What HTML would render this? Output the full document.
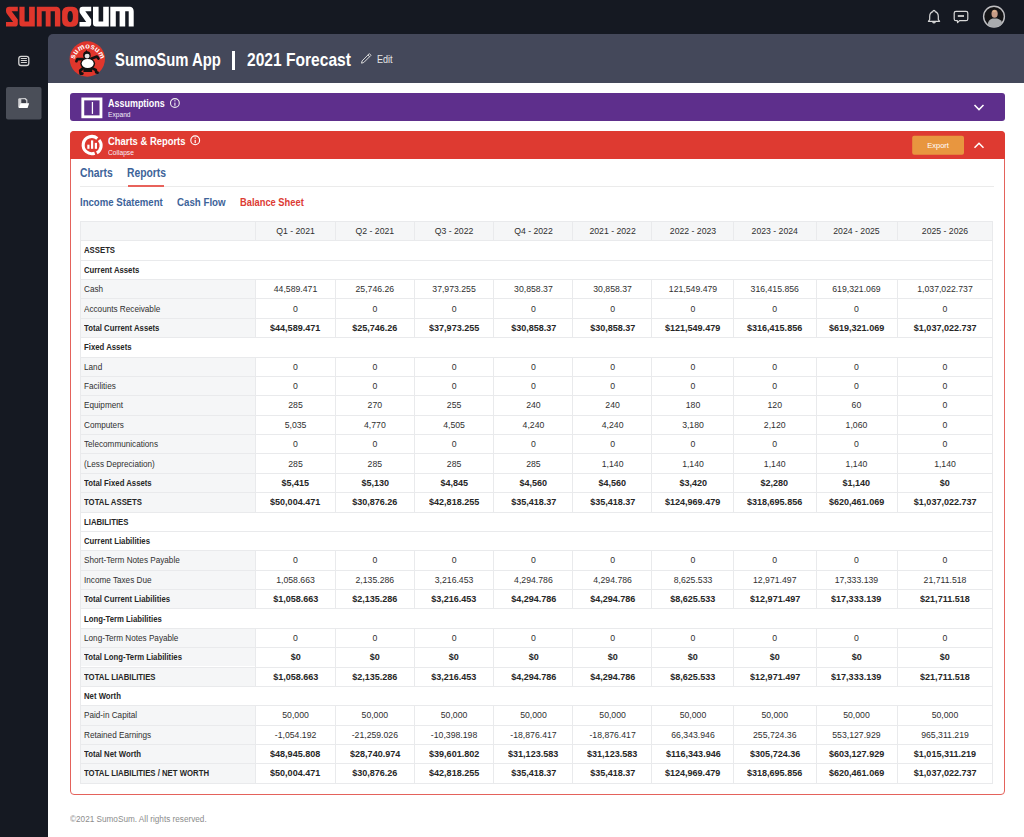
<!DOCTYPE html>
<html><head><meta charset="utf-8"><title>SumoSum App | 2021 Forecast</title>
<style>
html,body{margin:0;padding:0;}
body{width:1024px;height:837px;overflow:hidden;position:relative;background:#151922;font-family:"Liberation Sans",sans-serif;}
.abs{position:absolute;}
#top{position:absolute;left:0;top:0;width:1024px;height:34px;background:#151922;}
#side{position:absolute;left:0;top:34px;width:48px;height:803px;background:#151922;}
#band{position:absolute;left:48px;top:34px;width:976px;height:49px;background:#44485a;border-top-left-radius:5px;}
#main{position:absolute;left:48px;top:83px;width:976px;height:754px;background:#fff;}
.sx{display:inline-block;transform-origin:0 50%;white-space:nowrap;}
.bg{position:absolute;}
.hl{position:absolute;height:1px;background:#e9eaec;}
.vl{position:absolute;width:1px;background:#e9eaec;}
.t{position:absolute;height:19.37px;line-height:19.37px;font-size:8.7px;text-align:center;white-space:nowrap;color:#303030;}
.t.l{text-align:left;}
.sl{display:inline-block;transform-origin:0 50%;}
.sc{display:inline-block;transform-origin:50% 50%;}
.t.b{font-weight:bold;color:#262626;}
#panel1{position:absolute;left:69.5px;top:93.2px;width:935px;height:28.2px;background:#5e2f8c;border-radius:3px;}
#panel2{position:absolute;left:70px;top:131px;width:933px;height:662px;border:1px solid #e4625b;border-radius:4px;background:#fff;}
#p2head{position:absolute;left:70px;top:131px;width:935px;height:27.5px;background:#de3a31;border-radius:4px 4px 0 0;}
.ptitle{position:absolute;color:#fff;font-weight:bold;white-space:nowrap;}
.psub{position:absolute;color:#f4eefa;white-space:nowrap;}
.tab{position:absolute;font-weight:bold;white-space:nowrap;color:#3d6399;}
</style></head>
<body>
<div id="top"></div>
<div id="side"></div>
<div id="band"></div>
<div id="main"></div>

<!-- logo -->
<svg class="abs" style="left:0;top:0" width="140" height="34" viewBox="0 0 140 34">
 <g fill="#e0362c">
  <path d="M9.2,6.8 L17.8,6.8 L17.8,11.3 L11.6,11.3 L17.8,19.6 L17.8,23.8 Q17.8,26.6 15,26.6 L6,26.6 L6,21.9 L13.1,21.9 L6.9,13.8 Q6,12.6 6,11 L6,10 Q6,6.8 9.2,6.8 Z"/>
  <path d="M19.4,6.8 L24.6,6.8 L24.6,21.6 L29.1,21.6 L29.1,6.8 L34.8,6.8 L34.8,26.6 L22.4,26.6 Q19.4,26.6 19.4,23.6 Z"/>
  <path d="M36.8,6.8 L56.8,6.8 Q60.3,7.5 60.3,11.5 L60.3,26.6 L54.9,26.6 L54.9,11.2 L50.6,11.2 L50.6,26.6 L45.7,26.6 L45.7,11.2 L41.7,11.2 L41.7,26.6 L36.8,26.6 Z"/>
  <path fill-rule="evenodd" d="M68,6.8 L72.4,6.8 Q78.3,6.8 78.3,13.5 L78.3,20 Q78.3,26.7 72.4,26.7 L68,26.7 Q62.1,26.7 62.1,20 L62.1,13.5 Q62.1,6.8 68,6.8 Z M70.2,10.9 Q67.5,10.9 67.5,16.5 Q67.5,22.2 70.2,22.2 Q72.9,22.2 72.9,16.5 Q72.9,10.9 70.2,10.9 Z"/>
 </g>
 <g fill="#ffffff">
  <path d="M82.6,6.8 L91.2,6.8 L91.2,11.3 L85.3,11.3 L91.2,19.6 L91.2,23.8 Q91.2,26.6 88.4,26.6 L79.5,26.6 L79.5,21.9 L86.2,21.9 L80.4,13.8 Q79.5,12.6 79.5,11 L79.5,10 Q79.5,6.8 82.6,6.8 Z"/>
  <path d="M93,6.8 L98.6,6.8 L98.6,21.6 L103.2,21.6 L103.2,6.8 L108.8,6.8 L108.8,26.6 L96,26.6 Q93,26.6 93,23.6 Z"/>
  <path d="M110.3,6.8 L130.2,6.8 Q133.7,7.5 133.7,11.5 L133.7,26.6 L128.7,26.6 L128.7,11.2 L125.2,11.2 L125.2,26.6 L119.6,26.6 L119.6,11.2 L115.8,11.2 L115.8,26.6 L110.3,26.6 Z"/>
 </g>
</svg>

<!-- top right icons -->
<svg class="abs" style="left:920px;top:0" width="104" height="34" viewBox="920 0 104 34">
 <g fill="none" stroke="#d8d8d8" stroke-width="1.2" stroke-linejoin="round">
  <path d="M934,10.3 Q935,10.3 935.2,11.6 Q938.3,12.8 938.3,16.5 L938.3,19.5 L939.6,21.3 L928.4,21.3 L929.7,19.5 L929.7,16.5 Q929.7,12.8 932.8,11.6 Q933,10.3 934,10.3 Z"/>
  <path d="M932.5,22.2 Q934,23.4 935.5,22.2"/>
  <path d="M956,11.3 L966,11.3 Q967.8,11.3 967.8,13.1 L967.8,18.9 Q967.8,20.7 966,20.7 L959.5,20.7 L957.6,22.6 L957.3,20.7 L956,20.7 Q954.2,20.7 954.2,18.9 L954.2,13.1 Q954.2,11.3 956,11.3 Z"/>
 </g>
 <rect x="957.8" y="15" width="6.2" height="2" fill="#bdbdbd"/>
 <circle cx="994" cy="16.6" r="10.4" fill="#141416" stroke="#bfbfc2" stroke-width="1.4"/>
 <path d="M987.5,24.8 Q988.5,19.5 992.5,18.6 L997,18.6 Q1001.5,19.5 1002.3,23.5 Q999.5,27.1 994.5,27.1 Q990,27.1 987.5,24.8 Z" fill="#a9abae"/>
 <ellipse cx="994.6" cy="13.8" rx="3.1" ry="4" fill="#c79c86"/>
 <ellipse cx="994.3" cy="11.3" rx="1.6" ry="1" fill="#e0b48c"/>
</svg>

<!-- sidebar icons -->
<svg class="abs" style="left:0;top:34px" width="48" height="100" viewBox="0 34 48 100">
 <rect x="18.8" y="56.3" width="10" height="9.2" rx="2.3" fill="none" stroke="#d4d4d4" stroke-width="1.3"/>
 <rect x="20.8" y="58" width="6.1" height="1" fill="#d4d4d4"/>
 <rect x="20.8" y="60" width="6.1" height="1" fill="#d4d4d4"/>
 <rect x="20.8" y="62" width="6.1" height="1" fill="#d4d4d4"/>
 <rect x="6" y="87" width="35.5" height="32.6" rx="2" fill="#4a4e58"/>
 <path d="M19,98.2 L25.5,98 L27.4,99.8 L27.4,104 L18.2,107.5 L18.2,99 Z" fill="#cfcfd2"/>
 <path d="M21.3,99.3 L24.8,99.3 L26.2,100.8 L26.2,103.6 L21.3,103.6 Z" fill="#3a3d47"/>
 <path d="M20.8,103.3 L29.2,103.3 L27.6,108.1 L18.6,108.1 Z" fill="#ffffff"/>
</svg>

<!-- header band content -->
<svg class="abs" style="left:64px;top:36px" width="48" height="46" viewBox="64 36 48 46">
 <circle cx="87.3" cy="59" r="17.7" fill="#e0362c"/>
 <g fill="#ffffff" font-family="Liberation Sans" font-weight="bold" font-size="7.6"><text x="75.28" y="57.34" transform="rotate(-71.3 75.28 57.34)" text-anchor="middle">s</text><text x="77.45" y="53.38" transform="rotate(-51.3 77.45 53.38)" text-anchor="middle">u</text><text x="81.95" y="49.79" transform="rotate(-25.8 81.95 49.79)" text-anchor="middle">m</text><text x="87.55" y="48.50" transform="rotate(-0.2 87.55 48.50)" text-anchor="middle">o</text><text x="92.00" y="49.27" transform="rotate(19.8 92.00 49.27)" text-anchor="middle">s</text><text x="95.91" y="51.51" transform="rotate(39.8 95.91 51.51)" text-anchor="middle">u</text><text x="99.41" y="56.07" transform="rotate(65.3 99.41 56.07)" text-anchor="middle">m</text></g>
 <g fill="#111" stroke="none">
  <path d="M85.2,52.4 L86.4,49.8 L87.8,52.4 Z"/>
  <ellipse cx="86.9" cy="55.4" rx="3.8" ry="4.1"/>
  <ellipse cx="87.7" cy="63.6" rx="7.4" ry="5.8"/>
  <rect x="83.4" y="67.6" width="8.8" height="4.4"/>
 </g>
 <g fill="none" stroke="#111" stroke-width="2.7" stroke-linecap="round" stroke-linejoin="round">
  <path d="M83,59.2 L77.4,59 L76.4,61.2"/>
  <path d="M91,58.8 L97,56.6 L98.4,58.6"/>
  <path d="M82.8,68.4 L80.2,70.6 L80.6,73.6 L82.4,73.6"/>
  <path d="M92.6,68.4 L95.8,70 L96.2,72.4 L97.6,72.6"/>
 </g>
 <ellipse cx="87.1" cy="56.1" rx="2.5" ry="2.4" fill="#e4e4e4"/>
 <ellipse cx="87.7" cy="63.5" rx="6" ry="4.5" fill="#fff"/>
</svg>

<div class="ptitle" style="left:114.6px;top:47.8px;font-size:17.8px;line-height:24px;"><span class="sx" style="transform:scaleX(0.835)">SumoSum App</span></div>
<div class="abs" style="left:232.3px;top:51.1px;width:2.5px;height:18.6px;background:#fff"></div>
<div class="ptitle" style="left:246.5px;top:47.8px;font-size:17.8px;line-height:24px;"><span class="sx" style="transform:scaleX(0.876)">2021 Forecast</span></div>
<svg class="abs" style="left:358px;top:50px" width="16" height="16" viewBox="358 50 16 16">
 <path d="M369.3,53.6 L371,55.3 L363.8,62.5 L361.5,63.2 L362.1,60.9 Z M367.9,55 L369.6,56.7" fill="none" stroke="#dadada" stroke-width="1" stroke-linejoin="round"/>
</svg>
<div class="abs" style="left:376.5px;top:52.8px;font-size:10px;line-height:14px;color:#e6e6e6;white-space:nowrap"><span class="sx" style="transform:scaleX(0.9)">Edit</span></div>

<!-- panel 1 -->
<div id="panel1"></div>
<svg class="abs" style="left:70px;top:93px" width="934" height="28" viewBox="70 93 934 28">
 <rect x="82.8" y="98.95" width="18.15" height="17.85" fill="none" stroke="#fff" stroke-width="2.85"/>
 <rect x="91.8" y="102" width="1.25" height="11.9" fill="#fff"/>
 <circle cx="174.9" cy="103" r="4.4" fill="none" stroke="#eee" stroke-width="1.1"/>
 <rect x="174.3" y="102.6" width="1.2" height="3.2" fill="#e8e0f0"/>
 <rect x="174.3" y="100.2" width="1.2" height="1.2" fill="#e8e0f0"/>
 <path d="M974.5,105 L979,109.6 L983.5,105" fill="none" stroke="#fff" stroke-width="1.5"/>
</svg>
<div class="ptitle" style="left:107.5px;top:96.8px;font-size:10.2px;line-height:13px"><span class="sx" style="transform:scaleX(0.88)">Assumptions</span></div>
<div class="psub" style="left:107.5px;top:109.6px;font-size:7px;line-height:10px"><span class="sx" style="transform:scaleX(0.95)">Expand</span></div>

<!-- panel 2 -->
<div id="panel2"></div>
<div id="p2head"></div>
<svg class="abs" style="left:70px;top:131px" width="934" height="28" viewBox="70 131 934 28">
 <path d="M97.3,138.5 A8.6,8.6 0 1 0 94.7,153.2" fill="none" stroke="#fff" stroke-width="3.1"/>
 <path d="M96.8,152.9 A8.6,8.6 0 0 0 99.1,139.9" fill="none" stroke="#fff" stroke-width="3.1"/>
 <rect x="87.3" y="144.7" width="2.2" height="4.1" fill="#fff"/>
 <rect x="91" y="140.4" width="2.2" height="8.4" fill="#fff"/>
 <rect x="94.8" y="142.9" width="2.2" height="5.9" fill="#fff"/>
 <circle cx="195.2" cy="140.3" r="4.4" fill="none" stroke="#fff" stroke-width="1.1"/>
 <rect x="194.6" y="139.9" width="1.2" height="3.2" fill="#fff"/>
 <rect x="194.6" y="137.5" width="1.2" height="1.2" fill="#fff"/>
 <rect x="912.2" y="135.7" width="51.8" height="19.1" rx="2" fill="#e8963f"/>
 <path d="M974.5,147.8 L979,143.2 L983.5,147.8" fill="none" stroke="#fff" stroke-width="1.5"/>
</svg>
<div class="ptitle" style="left:107.5px;top:134.8px;font-size:10.2px;line-height:13px"><span class="sx" style="transform:scaleX(0.925)">Charts &amp; Reports</span></div>
<div class="psub" style="left:107.5px;top:147.6px;font-size:7px;line-height:10px"><span class="sx" style="transform:scaleX(0.95)">Collapse</span></div>
<div class="abs" style="left:912.2px;top:135.7px;width:51.8px;height:19.1px;line-height:19px;text-align:center;color:#fff;font-size:7.5px">Export</div>

<!-- tabs -->
<div class="tab" style="left:79.8px;top:166.3px;font-size:12px;line-height:15px"><span class="sx" style="transform:scaleX(0.86)">Charts</span></div>
<div class="tab" style="left:126.9px;top:166.3px;font-size:12px;line-height:15px"><span class="sx" style="transform:scaleX(0.86)">Reports</span></div>
<div class="abs" style="left:80px;top:186px;width:914px;height:1px;background:#ebebeb"></div>
<div class="abs" style="left:127.7px;top:185px;width:36.8px;height:1.6px;background:#e8625b"></div>
<div class="tab" style="left:80.3px;top:194.6px;font-size:11px;line-height:14px"><span class="sx" style="transform:scaleX(0.873)">Income Statement</span></div>
<div class="tab" style="left:177.4px;top:194.6px;font-size:11px;line-height:14px"><span class="sx" style="transform:scaleX(0.883)">Cash Flow</span></div>
<div class="tab" style="left:239.7px;top:194.6px;font-size:11px;line-height:14px;color:#dc3b34"><span class="sx" style="transform:scaleX(0.848)">Balance Sheet</span></div>

<!-- table -->
<div class="bg" style="left:80px;top:221px;width:913px;height:19.37px;background:#f5f6f7"></div>
<div class="bg" style="left:80px;top:279.11px;width:174.8px;height:19.37px;background:#f5f6f7"></div>
<div class="bg" style="left:80px;top:298.48px;width:174.8px;height:19.37px;background:#f5f6f7"></div>
<div class="bg" style="left:80px;top:317.85px;width:174.8px;height:19.37px;background:#f5f6f7"></div>
<div class="bg" style="left:80px;top:356.59px;width:174.8px;height:19.37px;background:#f5f6f7"></div>
<div class="bg" style="left:80px;top:375.96px;width:174.8px;height:19.37px;background:#f5f6f7"></div>
<div class="bg" style="left:80px;top:395.33px;width:174.8px;height:19.37px;background:#f5f6f7"></div>
<div class="bg" style="left:80px;top:414.7px;width:174.8px;height:19.37px;background:#f5f6f7"></div>
<div class="bg" style="left:80px;top:434.07px;width:174.8px;height:19.37px;background:#f5f6f7"></div>
<div class="bg" style="left:80px;top:453.44px;width:174.8px;height:19.37px;background:#f5f6f7"></div>
<div class="bg" style="left:80px;top:472.81px;width:174.8px;height:19.37px;background:#f5f6f7"></div>
<div class="bg" style="left:80px;top:492.18px;width:174.8px;height:19.37px;background:#f5f6f7"></div>
<div class="bg" style="left:80px;top:550.29px;width:174.8px;height:19.37px;background:#f5f6f7"></div>
<div class="bg" style="left:80px;top:569.66px;width:174.8px;height:19.37px;background:#f5f6f7"></div>
<div class="bg" style="left:80px;top:589.03px;width:174.8px;height:19.37px;background:#f5f6f7"></div>
<div class="bg" style="left:80px;top:627.77px;width:174.8px;height:19.37px;background:#f5f6f7"></div>
<div class="bg" style="left:80px;top:647.14px;width:174.8px;height:19.37px;background:#f5f6f7"></div>
<div class="bg" style="left:80px;top:666.51px;width:174.8px;height:19.37px;background:#f5f6f7"></div>
<div class="bg" style="left:80px;top:705.25px;width:174.8px;height:19.37px;background:#f5f6f7"></div>
<div class="bg" style="left:80px;top:724.62px;width:174.8px;height:19.37px;background:#f5f6f7"></div>
<div class="bg" style="left:80px;top:743.99px;width:174.8px;height:19.37px;background:#f5f6f7"></div>
<div class="bg" style="left:80px;top:763.36px;width:174.8px;height:19.37px;background:#f5f6f7"></div>
<div class="hl" style="left:80px;top:221px;width:913px"></div>
<div class="hl" style="left:80px;top:240.37px;width:913px"></div>
<div class="hl" style="left:80px;top:259.74px;width:913px"></div>
<div class="hl" style="left:80px;top:279.11px;width:913px"></div>
<div class="hl" style="left:80px;top:298.48px;width:913px"></div>
<div class="hl" style="left:80px;top:317.85px;width:913px"></div>
<div class="hl" style="left:80px;top:337.22px;width:913px"></div>
<div class="hl" style="left:80px;top:356.59px;width:913px"></div>
<div class="hl" style="left:80px;top:375.96px;width:913px"></div>
<div class="hl" style="left:80px;top:395.33px;width:913px"></div>
<div class="hl" style="left:80px;top:414.7px;width:913px"></div>
<div class="hl" style="left:80px;top:434.07px;width:913px"></div>
<div class="hl" style="left:80px;top:453.44px;width:913px"></div>
<div class="hl" style="left:80px;top:472.81px;width:913px"></div>
<div class="hl" style="left:80px;top:492.18px;width:913px"></div>
<div class="hl" style="left:80px;top:511.55px;width:913px"></div>
<div class="hl" style="left:80px;top:530.92px;width:913px"></div>
<div class="hl" style="left:80px;top:550.29px;width:913px"></div>
<div class="hl" style="left:80px;top:569.66px;width:913px"></div>
<div class="hl" style="left:80px;top:589.03px;width:913px"></div>
<div class="hl" style="left:80px;top:608.4px;width:913px"></div>
<div class="hl" style="left:80px;top:627.77px;width:913px"></div>
<div class="hl" style="left:80px;top:647.14px;width:913px"></div>
<div class="hl" style="left:80px;top:666.51px;width:913px"></div>
<div class="hl" style="left:80px;top:685.88px;width:913px"></div>
<div class="hl" style="left:80px;top:705.25px;width:913px"></div>
<div class="hl" style="left:80px;top:724.62px;width:913px"></div>
<div class="hl" style="left:80px;top:743.99px;width:913px"></div>
<div class="hl" style="left:80px;top:763.36px;width:913px"></div>
<div class="hl" style="left:80px;top:782.73px;width:913px"></div>
<div class="vl" style="left:80px;top:221px;height:561.73px"></div>
<div class="vl" style="left:992px;top:221px;height:561.73px"></div>
<div class="vl" style="left:254.8px;top:221px;height:19.37px"></div>
<div class="vl" style="left:334.5px;top:221px;height:19.37px"></div>
<div class="vl" style="left:413.6px;top:221px;height:19.37px"></div>
<div class="vl" style="left:493.1px;top:221px;height:19.37px"></div>
<div class="vl" style="left:572.4px;top:221px;height:19.37px"></div>
<div class="vl" style="left:651.4px;top:221px;height:19.37px"></div>
<div class="vl" style="left:733.4px;top:221px;height:19.37px"></div>
<div class="vl" style="left:815.5px;top:221px;height:19.37px"></div>
<div class="vl" style="left:897px;top:221px;height:19.37px"></div>
<div class="vl" style="left:254.8px;top:279.11px;height:58.11px"></div>
<div class="vl" style="left:334.5px;top:279.11px;height:58.11px"></div>
<div class="vl" style="left:413.6px;top:279.11px;height:58.11px"></div>
<div class="vl" style="left:493.1px;top:279.11px;height:58.11px"></div>
<div class="vl" style="left:572.4px;top:279.11px;height:58.11px"></div>
<div class="vl" style="left:651.4px;top:279.11px;height:58.11px"></div>
<div class="vl" style="left:733.4px;top:279.11px;height:58.11px"></div>
<div class="vl" style="left:815.5px;top:279.11px;height:58.11px"></div>
<div class="vl" style="left:897px;top:279.11px;height:58.11px"></div>
<div class="vl" style="left:254.8px;top:356.59px;height:154.96px"></div>
<div class="vl" style="left:334.5px;top:356.59px;height:154.96px"></div>
<div class="vl" style="left:413.6px;top:356.59px;height:154.96px"></div>
<div class="vl" style="left:493.1px;top:356.59px;height:154.96px"></div>
<div class="vl" style="left:572.4px;top:356.59px;height:154.96px"></div>
<div class="vl" style="left:651.4px;top:356.59px;height:154.96px"></div>
<div class="vl" style="left:733.4px;top:356.59px;height:154.96px"></div>
<div class="vl" style="left:815.5px;top:356.59px;height:154.96px"></div>
<div class="vl" style="left:897px;top:356.59px;height:154.96px"></div>
<div class="vl" style="left:254.8px;top:550.29px;height:58.11px"></div>
<div class="vl" style="left:334.5px;top:550.29px;height:58.11px"></div>
<div class="vl" style="left:413.6px;top:550.29px;height:58.11px"></div>
<div class="vl" style="left:493.1px;top:550.29px;height:58.11px"></div>
<div class="vl" style="left:572.4px;top:550.29px;height:58.11px"></div>
<div class="vl" style="left:651.4px;top:550.29px;height:58.11px"></div>
<div class="vl" style="left:733.4px;top:550.29px;height:58.11px"></div>
<div class="vl" style="left:815.5px;top:550.29px;height:58.11px"></div>
<div class="vl" style="left:897px;top:550.29px;height:58.11px"></div>
<div class="vl" style="left:254.8px;top:627.77px;height:58.11px"></div>
<div class="vl" style="left:334.5px;top:627.77px;height:58.11px"></div>
<div class="vl" style="left:413.6px;top:627.77px;height:58.11px"></div>
<div class="vl" style="left:493.1px;top:627.77px;height:58.11px"></div>
<div class="vl" style="left:572.4px;top:627.77px;height:58.11px"></div>
<div class="vl" style="left:651.4px;top:627.77px;height:58.11px"></div>
<div class="vl" style="left:733.4px;top:627.77px;height:58.11px"></div>
<div class="vl" style="left:815.5px;top:627.77px;height:58.11px"></div>
<div class="vl" style="left:897px;top:627.77px;height:58.11px"></div>
<div class="vl" style="left:254.8px;top:705.25px;height:77.48px"></div>
<div class="vl" style="left:334.5px;top:705.25px;height:77.48px"></div>
<div class="vl" style="left:413.6px;top:705.25px;height:77.48px"></div>
<div class="vl" style="left:493.1px;top:705.25px;height:77.48px"></div>
<div class="vl" style="left:572.4px;top:705.25px;height:77.48px"></div>
<div class="vl" style="left:651.4px;top:705.25px;height:77.48px"></div>
<div class="vl" style="left:733.4px;top:705.25px;height:77.48px"></div>
<div class="vl" style="left:815.5px;top:705.25px;height:77.48px"></div>
<div class="vl" style="left:897px;top:705.25px;height:77.48px"></div>
<div class="t r" style="left:255.7px;width:79.7px;top:221.5px">Q1 - 2021</div>
<div class="t r" style="left:335.3px;width:79.1px;top:221.5px">Q2 - 2021</div>
<div class="t r" style="left:414.3px;width:79.5px;top:221.5px">Q3 - 2022</div>
<div class="t r" style="left:493.8px;width:79.3px;top:221.5px">Q4 - 2022</div>
<div class="t r" style="left:573.1px;width:79px;top:221.5px">2021 - 2022</div>
<div class="t r" style="left:652px;width:82px;top:221.5px">2022 - 2023</div>
<div class="t r" style="left:733.7px;width:82.1px;top:221.5px">2023 - 2024</div>
<div class="t r" style="left:815.7px;width:81.5px;top:221.5px">2024 - 2025</div>
<div class="t r" style="left:897px;width:96px;top:221.5px">2025 - 2026</div>
<div class="t l b" style="left:84.3px;top:241.47px"><span class="sl" style="transform:scaleX(0.893)">ASSETS</span></div>
<div class="t l b" style="left:84.3px;top:260.84px"><span class="sl" style="transform:scaleX(0.893)">Current Assets</span></div>
<div class="t l r" style="left:84.3px;top:280.21px"><span class="sl" style="transform:scaleX(0.94)">Cash</span></div>
<div class="t r" style="left:255.7px;width:79.7px;top:280.21px">44,589.471</div>
<div class="t r" style="left:335.3px;width:79.1px;top:280.21px">25,746.26</div>
<div class="t r" style="left:414.3px;width:79.5px;top:280.21px">37,973.255</div>
<div class="t r" style="left:493.8px;width:79.3px;top:280.21px">30,858.37</div>
<div class="t r" style="left:573.1px;width:79px;top:280.21px">30,858.37</div>
<div class="t r" style="left:652px;width:82px;top:280.21px">121,549.479</div>
<div class="t r" style="left:733.7px;width:82.1px;top:280.21px">316,415.856</div>
<div class="t r" style="left:815.7px;width:81.5px;top:280.21px">619,321.069</div>
<div class="t r" style="left:897px;width:96px;top:280.21px">1,037,022.737</div>
<div class="t l r" style="left:84.3px;top:299.58px"><span class="sl" style="transform:scaleX(0.94)">Accounts Receivable</span></div>
<div class="t r" style="left:255.7px;width:79.7px;top:299.58px">0</div>
<div class="t r" style="left:335.3px;width:79.1px;top:299.58px">0</div>
<div class="t r" style="left:414.3px;width:79.5px;top:299.58px">0</div>
<div class="t r" style="left:493.8px;width:79.3px;top:299.58px">0</div>
<div class="t r" style="left:573.1px;width:79px;top:299.58px">0</div>
<div class="t r" style="left:652px;width:82px;top:299.58px">0</div>
<div class="t r" style="left:733.7px;width:82.1px;top:299.58px">0</div>
<div class="t r" style="left:815.7px;width:81.5px;top:299.58px">0</div>
<div class="t r" style="left:897px;width:96px;top:299.58px">0</div>
<div class="t l b" style="left:84.3px;top:318.95px"><span class="sl" style="transform:scaleX(0.893)">Total Current Assets</span></div>
<div class="t b" style="left:255.7px;width:79.7px;top:318.95px"><span class="sc" style="transform:scaleX(1.04)">$44,589.471</span></div>
<div class="t b" style="left:335.3px;width:79.1px;top:318.95px"><span class="sc" style="transform:scaleX(1.04)">$25,746.26</span></div>
<div class="t b" style="left:414.3px;width:79.5px;top:318.95px"><span class="sc" style="transform:scaleX(1.04)">$37,973.255</span></div>
<div class="t b" style="left:493.8px;width:79.3px;top:318.95px"><span class="sc" style="transform:scaleX(1.04)">$30,858.37</span></div>
<div class="t b" style="left:573.1px;width:79px;top:318.95px"><span class="sc" style="transform:scaleX(1.04)">$30,858.37</span></div>
<div class="t b" style="left:652px;width:82px;top:318.95px"><span class="sc" style="transform:scaleX(1.04)">$121,549.479</span></div>
<div class="t b" style="left:733.7px;width:82.1px;top:318.95px"><span class="sc" style="transform:scaleX(1.04)">$316,415.856</span></div>
<div class="t b" style="left:815.7px;width:81.5px;top:318.95px"><span class="sc" style="transform:scaleX(1.04)">$619,321.069</span></div>
<div class="t b" style="left:897px;width:96px;top:318.95px"><span class="sc" style="transform:scaleX(1.04)">$1,037,022.737</span></div>
<div class="t l b" style="left:84.3px;top:338.32px"><span class="sl" style="transform:scaleX(0.893)">Fixed Assets</span></div>
<div class="t l r" style="left:84.3px;top:357.69px"><span class="sl" style="transform:scaleX(0.94)">Land</span></div>
<div class="t r" style="left:255.7px;width:79.7px;top:357.69px">0</div>
<div class="t r" style="left:335.3px;width:79.1px;top:357.69px">0</div>
<div class="t r" style="left:414.3px;width:79.5px;top:357.69px">0</div>
<div class="t r" style="left:493.8px;width:79.3px;top:357.69px">0</div>
<div class="t r" style="left:573.1px;width:79px;top:357.69px">0</div>
<div class="t r" style="left:652px;width:82px;top:357.69px">0</div>
<div class="t r" style="left:733.7px;width:82.1px;top:357.69px">0</div>
<div class="t r" style="left:815.7px;width:81.5px;top:357.69px">0</div>
<div class="t r" style="left:897px;width:96px;top:357.69px">0</div>
<div class="t l r" style="left:84.3px;top:377.06px"><span class="sl" style="transform:scaleX(0.94)">Facilities</span></div>
<div class="t r" style="left:255.7px;width:79.7px;top:377.06px">0</div>
<div class="t r" style="left:335.3px;width:79.1px;top:377.06px">0</div>
<div class="t r" style="left:414.3px;width:79.5px;top:377.06px">0</div>
<div class="t r" style="left:493.8px;width:79.3px;top:377.06px">0</div>
<div class="t r" style="left:573.1px;width:79px;top:377.06px">0</div>
<div class="t r" style="left:652px;width:82px;top:377.06px">0</div>
<div class="t r" style="left:733.7px;width:82.1px;top:377.06px">0</div>
<div class="t r" style="left:815.7px;width:81.5px;top:377.06px">0</div>
<div class="t r" style="left:897px;width:96px;top:377.06px">0</div>
<div class="t l r" style="left:84.3px;top:396.43px"><span class="sl" style="transform:scaleX(0.94)">Equipment</span></div>
<div class="t r" style="left:255.7px;width:79.7px;top:396.43px">285</div>
<div class="t r" style="left:335.3px;width:79.1px;top:396.43px">270</div>
<div class="t r" style="left:414.3px;width:79.5px;top:396.43px">255</div>
<div class="t r" style="left:493.8px;width:79.3px;top:396.43px">240</div>
<div class="t r" style="left:573.1px;width:79px;top:396.43px">240</div>
<div class="t r" style="left:652px;width:82px;top:396.43px">180</div>
<div class="t r" style="left:733.7px;width:82.1px;top:396.43px">120</div>
<div class="t r" style="left:815.7px;width:81.5px;top:396.43px">60</div>
<div class="t r" style="left:897px;width:96px;top:396.43px">0</div>
<div class="t l r" style="left:84.3px;top:415.8px"><span class="sl" style="transform:scaleX(0.94)">Computers</span></div>
<div class="t r" style="left:255.7px;width:79.7px;top:415.8px">5,035</div>
<div class="t r" style="left:335.3px;width:79.1px;top:415.8px">4,770</div>
<div class="t r" style="left:414.3px;width:79.5px;top:415.8px">4,505</div>
<div class="t r" style="left:493.8px;width:79.3px;top:415.8px">4,240</div>
<div class="t r" style="left:573.1px;width:79px;top:415.8px">4,240</div>
<div class="t r" style="left:652px;width:82px;top:415.8px">3,180</div>
<div class="t r" style="left:733.7px;width:82.1px;top:415.8px">2,120</div>
<div class="t r" style="left:815.7px;width:81.5px;top:415.8px">1,060</div>
<div class="t r" style="left:897px;width:96px;top:415.8px">0</div>
<div class="t l r" style="left:84.3px;top:435.17px"><span class="sl" style="transform:scaleX(0.94)">Telecommunications</span></div>
<div class="t r" style="left:255.7px;width:79.7px;top:435.17px">0</div>
<div class="t r" style="left:335.3px;width:79.1px;top:435.17px">0</div>
<div class="t r" style="left:414.3px;width:79.5px;top:435.17px">0</div>
<div class="t r" style="left:493.8px;width:79.3px;top:435.17px">0</div>
<div class="t r" style="left:573.1px;width:79px;top:435.17px">0</div>
<div class="t r" style="left:652px;width:82px;top:435.17px">0</div>
<div class="t r" style="left:733.7px;width:82.1px;top:435.17px">0</div>
<div class="t r" style="left:815.7px;width:81.5px;top:435.17px">0</div>
<div class="t r" style="left:897px;width:96px;top:435.17px">0</div>
<div class="t l r" style="left:84.3px;top:454.54px"><span class="sl" style="transform:scaleX(0.94)">(Less Depreciation)</span></div>
<div class="t r" style="left:255.7px;width:79.7px;top:454.54px">285</div>
<div class="t r" style="left:335.3px;width:79.1px;top:454.54px">285</div>
<div class="t r" style="left:414.3px;width:79.5px;top:454.54px">285</div>
<div class="t r" style="left:493.8px;width:79.3px;top:454.54px">285</div>
<div class="t r" style="left:573.1px;width:79px;top:454.54px">1,140</div>
<div class="t r" style="left:652px;width:82px;top:454.54px">1,140</div>
<div class="t r" style="left:733.7px;width:82.1px;top:454.54px">1,140</div>
<div class="t r" style="left:815.7px;width:81.5px;top:454.54px">1,140</div>
<div class="t r" style="left:897px;width:96px;top:454.54px">1,140</div>
<div class="t l b" style="left:84.3px;top:473.91px"><span class="sl" style="transform:scaleX(0.893)">Total Fixed Assets</span></div>
<div class="t b" style="left:255.7px;width:79.7px;top:473.91px"><span class="sc" style="transform:scaleX(1.04)">$5,415</span></div>
<div class="t b" style="left:335.3px;width:79.1px;top:473.91px"><span class="sc" style="transform:scaleX(1.04)">$5,130</span></div>
<div class="t b" style="left:414.3px;width:79.5px;top:473.91px"><span class="sc" style="transform:scaleX(1.04)">$4,845</span></div>
<div class="t b" style="left:493.8px;width:79.3px;top:473.91px"><span class="sc" style="transform:scaleX(1.04)">$4,560</span></div>
<div class="t b" style="left:573.1px;width:79px;top:473.91px"><span class="sc" style="transform:scaleX(1.04)">$4,560</span></div>
<div class="t b" style="left:652px;width:82px;top:473.91px"><span class="sc" style="transform:scaleX(1.04)">$3,420</span></div>
<div class="t b" style="left:733.7px;width:82.1px;top:473.91px"><span class="sc" style="transform:scaleX(1.04)">$2,280</span></div>
<div class="t b" style="left:815.7px;width:81.5px;top:473.91px"><span class="sc" style="transform:scaleX(1.04)">$1,140</span></div>
<div class="t b" style="left:897px;width:96px;top:473.91px"><span class="sc" style="transform:scaleX(1.04)">$0</span></div>
<div class="t l b" style="left:84.3px;top:493.28px"><span class="sl" style="transform:scaleX(0.893)">TOTAL ASSETS</span></div>
<div class="t b" style="left:255.7px;width:79.7px;top:493.28px"><span class="sc" style="transform:scaleX(1.04)">$50,004.471</span></div>
<div class="t b" style="left:335.3px;width:79.1px;top:493.28px"><span class="sc" style="transform:scaleX(1.04)">$30,876.26</span></div>
<div class="t b" style="left:414.3px;width:79.5px;top:493.28px"><span class="sc" style="transform:scaleX(1.04)">$42,818.255</span></div>
<div class="t b" style="left:493.8px;width:79.3px;top:493.28px"><span class="sc" style="transform:scaleX(1.04)">$35,418.37</span></div>
<div class="t b" style="left:573.1px;width:79px;top:493.28px"><span class="sc" style="transform:scaleX(1.04)">$35,418.37</span></div>
<div class="t b" style="left:652px;width:82px;top:493.28px"><span class="sc" style="transform:scaleX(1.04)">$124,969.479</span></div>
<div class="t b" style="left:733.7px;width:82.1px;top:493.28px"><span class="sc" style="transform:scaleX(1.04)">$318,695.856</span></div>
<div class="t b" style="left:815.7px;width:81.5px;top:493.28px"><span class="sc" style="transform:scaleX(1.04)">$620,461.069</span></div>
<div class="t b" style="left:897px;width:96px;top:493.28px"><span class="sc" style="transform:scaleX(1.04)">$1,037,022.737</span></div>
<div class="t l b" style="left:84.3px;top:512.65px"><span class="sl" style="transform:scaleX(0.893)">LIABILITIES</span></div>
<div class="t l b" style="left:84.3px;top:532.02px"><span class="sl" style="transform:scaleX(0.893)">Current Liabilities</span></div>
<div class="t l r" style="left:84.3px;top:551.39px"><span class="sl" style="transform:scaleX(0.94)">Short-Term Notes Payable</span></div>
<div class="t r" style="left:255.7px;width:79.7px;top:551.39px">0</div>
<div class="t r" style="left:335.3px;width:79.1px;top:551.39px">0</div>
<div class="t r" style="left:414.3px;width:79.5px;top:551.39px">0</div>
<div class="t r" style="left:493.8px;width:79.3px;top:551.39px">0</div>
<div class="t r" style="left:573.1px;width:79px;top:551.39px">0</div>
<div class="t r" style="left:652px;width:82px;top:551.39px">0</div>
<div class="t r" style="left:733.7px;width:82.1px;top:551.39px">0</div>
<div class="t r" style="left:815.7px;width:81.5px;top:551.39px">0</div>
<div class="t r" style="left:897px;width:96px;top:551.39px">0</div>
<div class="t l r" style="left:84.3px;top:570.76px"><span class="sl" style="transform:scaleX(0.94)">Income Taxes Due</span></div>
<div class="t r" style="left:255.7px;width:79.7px;top:570.76px">1,058.663</div>
<div class="t r" style="left:335.3px;width:79.1px;top:570.76px">2,135.286</div>
<div class="t r" style="left:414.3px;width:79.5px;top:570.76px">3,216.453</div>
<div class="t r" style="left:493.8px;width:79.3px;top:570.76px">4,294.786</div>
<div class="t r" style="left:573.1px;width:79px;top:570.76px">4,294.786</div>
<div class="t r" style="left:652px;width:82px;top:570.76px">8,625.533</div>
<div class="t r" style="left:733.7px;width:82.1px;top:570.76px">12,971.497</div>
<div class="t r" style="left:815.7px;width:81.5px;top:570.76px">17,333.139</div>
<div class="t r" style="left:897px;width:96px;top:570.76px">21,711.518</div>
<div class="t l b" style="left:84.3px;top:590.13px"><span class="sl" style="transform:scaleX(0.893)">Total Current Liabilities</span></div>
<div class="t b" style="left:255.7px;width:79.7px;top:590.13px"><span class="sc" style="transform:scaleX(1.04)">$1,058.663</span></div>
<div class="t b" style="left:335.3px;width:79.1px;top:590.13px"><span class="sc" style="transform:scaleX(1.04)">$2,135.286</span></div>
<div class="t b" style="left:414.3px;width:79.5px;top:590.13px"><span class="sc" style="transform:scaleX(1.04)">$3,216.453</span></div>
<div class="t b" style="left:493.8px;width:79.3px;top:590.13px"><span class="sc" style="transform:scaleX(1.04)">$4,294.786</span></div>
<div class="t b" style="left:573.1px;width:79px;top:590.13px"><span class="sc" style="transform:scaleX(1.04)">$4,294.786</span></div>
<div class="t b" style="left:652px;width:82px;top:590.13px"><span class="sc" style="transform:scaleX(1.04)">$8,625.533</span></div>
<div class="t b" style="left:733.7px;width:82.1px;top:590.13px"><span class="sc" style="transform:scaleX(1.04)">$12,971.497</span></div>
<div class="t b" style="left:815.7px;width:81.5px;top:590.13px"><span class="sc" style="transform:scaleX(1.04)">$17,333.139</span></div>
<div class="t b" style="left:897px;width:96px;top:590.13px"><span class="sc" style="transform:scaleX(1.04)">$21,711.518</span></div>
<div class="t l b" style="left:84.3px;top:609.5px"><span class="sl" style="transform:scaleX(0.893)">Long-Term Liabilities</span></div>
<div class="t l r" style="left:84.3px;top:628.87px"><span class="sl" style="transform:scaleX(0.94)">Long-Term Notes Payable</span></div>
<div class="t r" style="left:255.7px;width:79.7px;top:628.87px">0</div>
<div class="t r" style="left:335.3px;width:79.1px;top:628.87px">0</div>
<div class="t r" style="left:414.3px;width:79.5px;top:628.87px">0</div>
<div class="t r" style="left:493.8px;width:79.3px;top:628.87px">0</div>
<div class="t r" style="left:573.1px;width:79px;top:628.87px">0</div>
<div class="t r" style="left:652px;width:82px;top:628.87px">0</div>
<div class="t r" style="left:733.7px;width:82.1px;top:628.87px">0</div>
<div class="t r" style="left:815.7px;width:81.5px;top:628.87px">0</div>
<div class="t r" style="left:897px;width:96px;top:628.87px">0</div>
<div class="t l b" style="left:84.3px;top:648.24px"><span class="sl" style="transform:scaleX(0.893)">Total Long-Term Liabilities</span></div>
<div class="t b" style="left:255.7px;width:79.7px;top:648.24px"><span class="sc" style="transform:scaleX(1.04)">$0</span></div>
<div class="t b" style="left:335.3px;width:79.1px;top:648.24px"><span class="sc" style="transform:scaleX(1.04)">$0</span></div>
<div class="t b" style="left:414.3px;width:79.5px;top:648.24px"><span class="sc" style="transform:scaleX(1.04)">$0</span></div>
<div class="t b" style="left:493.8px;width:79.3px;top:648.24px"><span class="sc" style="transform:scaleX(1.04)">$0</span></div>
<div class="t b" style="left:573.1px;width:79px;top:648.24px"><span class="sc" style="transform:scaleX(1.04)">$0</span></div>
<div class="t b" style="left:652px;width:82px;top:648.24px"><span class="sc" style="transform:scaleX(1.04)">$0</span></div>
<div class="t b" style="left:733.7px;width:82.1px;top:648.24px"><span class="sc" style="transform:scaleX(1.04)">$0</span></div>
<div class="t b" style="left:815.7px;width:81.5px;top:648.24px"><span class="sc" style="transform:scaleX(1.04)">$0</span></div>
<div class="t b" style="left:897px;width:96px;top:648.24px"><span class="sc" style="transform:scaleX(1.04)">$0</span></div>
<div class="t l b" style="left:84.3px;top:667.61px"><span class="sl" style="transform:scaleX(0.893)">TOTAL LIABILITIES</span></div>
<div class="t b" style="left:255.7px;width:79.7px;top:667.61px"><span class="sc" style="transform:scaleX(1.04)">$1,058.663</span></div>
<div class="t b" style="left:335.3px;width:79.1px;top:667.61px"><span class="sc" style="transform:scaleX(1.04)">$2,135.286</span></div>
<div class="t b" style="left:414.3px;width:79.5px;top:667.61px"><span class="sc" style="transform:scaleX(1.04)">$3,216.453</span></div>
<div class="t b" style="left:493.8px;width:79.3px;top:667.61px"><span class="sc" style="transform:scaleX(1.04)">$4,294.786</span></div>
<div class="t b" style="left:573.1px;width:79px;top:667.61px"><span class="sc" style="transform:scaleX(1.04)">$4,294.786</span></div>
<div class="t b" style="left:652px;width:82px;top:667.61px"><span class="sc" style="transform:scaleX(1.04)">$8,625.533</span></div>
<div class="t b" style="left:733.7px;width:82.1px;top:667.61px"><span class="sc" style="transform:scaleX(1.04)">$12,971.497</span></div>
<div class="t b" style="left:815.7px;width:81.5px;top:667.61px"><span class="sc" style="transform:scaleX(1.04)">$17,333.139</span></div>
<div class="t b" style="left:897px;width:96px;top:667.61px"><span class="sc" style="transform:scaleX(1.04)">$21,711.518</span></div>
<div class="t l b" style="left:84.3px;top:686.98px"><span class="sl" style="transform:scaleX(0.893)">Net Worth</span></div>
<div class="t l r" style="left:84.3px;top:706.35px"><span class="sl" style="transform:scaleX(0.94)">Paid-in Capital</span></div>
<div class="t r" style="left:255.7px;width:79.7px;top:706.35px">50,000</div>
<div class="t r" style="left:335.3px;width:79.1px;top:706.35px">50,000</div>
<div class="t r" style="left:414.3px;width:79.5px;top:706.35px">50,000</div>
<div class="t r" style="left:493.8px;width:79.3px;top:706.35px">50,000</div>
<div class="t r" style="left:573.1px;width:79px;top:706.35px">50,000</div>
<div class="t r" style="left:652px;width:82px;top:706.35px">50,000</div>
<div class="t r" style="left:733.7px;width:82.1px;top:706.35px">50,000</div>
<div class="t r" style="left:815.7px;width:81.5px;top:706.35px">50,000</div>
<div class="t r" style="left:897px;width:96px;top:706.35px">50,000</div>
<div class="t l r" style="left:84.3px;top:725.72px"><span class="sl" style="transform:scaleX(0.94)">Retained Earnings</span></div>
<div class="t r" style="left:255.7px;width:79.7px;top:725.72px">-1,054.192</div>
<div class="t r" style="left:335.3px;width:79.1px;top:725.72px">-21,259.026</div>
<div class="t r" style="left:414.3px;width:79.5px;top:725.72px">-10,398.198</div>
<div class="t r" style="left:493.8px;width:79.3px;top:725.72px">-18,876.417</div>
<div class="t r" style="left:573.1px;width:79px;top:725.72px">-18,876.417</div>
<div class="t r" style="left:652px;width:82px;top:725.72px">66,343.946</div>
<div class="t r" style="left:733.7px;width:82.1px;top:725.72px">255,724.36</div>
<div class="t r" style="left:815.7px;width:81.5px;top:725.72px">553,127.929</div>
<div class="t r" style="left:897px;width:96px;top:725.72px">965,311.219</div>
<div class="t l b" style="left:84.3px;top:745.09px"><span class="sl" style="transform:scaleX(0.893)">Total Net Worth</span></div>
<div class="t b" style="left:255.7px;width:79.7px;top:745.09px"><span class="sc" style="transform:scaleX(1.04)">$48,945.808</span></div>
<div class="t b" style="left:335.3px;width:79.1px;top:745.09px"><span class="sc" style="transform:scaleX(1.04)">$28,740.974</span></div>
<div class="t b" style="left:414.3px;width:79.5px;top:745.09px"><span class="sc" style="transform:scaleX(1.04)">$39,601.802</span></div>
<div class="t b" style="left:493.8px;width:79.3px;top:745.09px"><span class="sc" style="transform:scaleX(1.04)">$31,123.583</span></div>
<div class="t b" style="left:573.1px;width:79px;top:745.09px"><span class="sc" style="transform:scaleX(1.04)">$31,123.583</span></div>
<div class="t b" style="left:652px;width:82px;top:745.09px"><span class="sc" style="transform:scaleX(1.04)">$116,343.946</span></div>
<div class="t b" style="left:733.7px;width:82.1px;top:745.09px"><span class="sc" style="transform:scaleX(1.04)">$305,724.36</span></div>
<div class="t b" style="left:815.7px;width:81.5px;top:745.09px"><span class="sc" style="transform:scaleX(1.04)">$603,127.929</span></div>
<div class="t b" style="left:897px;width:96px;top:745.09px"><span class="sc" style="transform:scaleX(1.04)">$1,015,311.219</span></div>
<div class="t l b" style="left:84.3px;top:764.46px"><span class="sl" style="transform:scaleX(0.893)">TOTAL LIABILITIES / NET WORTH</span></div>
<div class="t b" style="left:255.7px;width:79.7px;top:764.46px"><span class="sc" style="transform:scaleX(1.04)">$50,004.471</span></div>
<div class="t b" style="left:335.3px;width:79.1px;top:764.46px"><span class="sc" style="transform:scaleX(1.04)">$30,876.26</span></div>
<div class="t b" style="left:414.3px;width:79.5px;top:764.46px"><span class="sc" style="transform:scaleX(1.04)">$42,818.255</span></div>
<div class="t b" style="left:493.8px;width:79.3px;top:764.46px"><span class="sc" style="transform:scaleX(1.04)">$35,418.37</span></div>
<div class="t b" style="left:573.1px;width:79px;top:764.46px"><span class="sc" style="transform:scaleX(1.04)">$35,418.37</span></div>
<div class="t b" style="left:652px;width:82px;top:764.46px"><span class="sc" style="transform:scaleX(1.04)">$124,969.479</span></div>
<div class="t b" style="left:733.7px;width:82.1px;top:764.46px"><span class="sc" style="transform:scaleX(1.04)">$318,695.856</span></div>
<div class="t b" style="left:815.7px;width:81.5px;top:764.46px"><span class="sc" style="transform:scaleX(1.04)">$620,461.069</span></div>
<div class="t b" style="left:897px;width:96px;top:764.46px"><span class="sc" style="transform:scaleX(1.04)">$1,037,022.737</span></div>

<div class="abs" style="left:69.7px;top:813px;font-size:8.4px;line-height:12px;color:#8c8c8c;white-space:nowrap"><span class="sx" style="transform:scaleX(0.978)">©2021 SumoSum. All rights reserved.</span></div>
</body></html>
